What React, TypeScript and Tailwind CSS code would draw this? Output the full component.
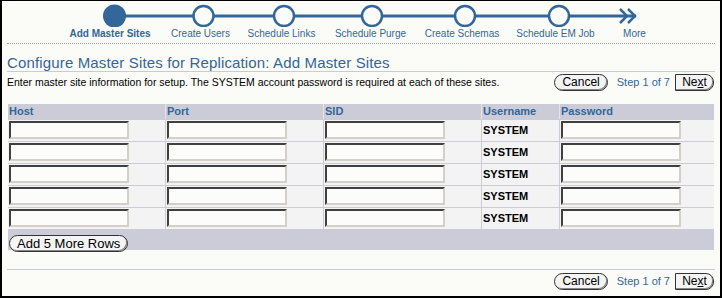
import React from 'react';

const steps = [
  { label: 'Add Master Sites', w: 'w-[100px]', active: true },
  { label: 'Create Users', w: 'w-[81px]' },
  { label: 'Schedule Links', w: 'w-[81px]' },
  { label: 'Schedule Purge', w: 'w-[97px]' },
  { label: 'Create Schemas', w: 'w-[86px]' },
  { label: 'Schedule EM Job', w: 'w-[101px]' },
  { label: 'More', w: 'w-[57px]' },
];

const circles = [203.5, 284, 372, 465, 559];

function Train() {
  return (
    <div>
      <svg width="718" height="26" viewBox="0 0 718 26" className="block">
        <line x1="112" y1="15" x2="634" y2="15" stroke="#336699" strokeWidth="3" />
        <circle cx="112.5" cy="15" r="11.5" fill="#336699" />
        {circles.map((cx) => (
          <circle key={cx} cx={cx - 2} cy="15" r="10" fill="#fbfcf8" stroke="#336699" strokeWidth="2.5" />
        ))}
        <path d="M618 8 L625 15 L618 22 M626 8 L633 15 L626 22" fill="none" stroke="#336699" strokeWidth="2.5" />
      </svg>
      <div className="flex pl-[58px] text-[10px] leading-[13px] text-[#336699]">
        {steps.map((s) => (
          <div key={s.label} className={`${s.w} text-center whitespace-nowrap ${s.active ? 'font-bold' : ''}`}>
            {s.label}
          </div>
        ))}
      </div>
      <div className="mx-[5px] mt-[3px] border-t border-dotted border-[#9aa3ad]" />
    </div>
  );
}

function PillButton({ children, size = 'text-[12px]' }: { children: React.ReactNode; size?: string }) {
  return (
    <button
      className={`h-[17px] px-[7px] rounded-[9px] border border-[#333] bg-[#f4f4f4] ${size} leading-[15px] text-black shadow-[inset_-1px_-1px_0_#888] whitespace-nowrap`}
    >
      {children}
    </button>
  );
}

function NavBar() {
  return (
    <div className="flex items-center">
      <PillButton>Cancel</PillButton>
      <span className="ml-[9px] text-[11px] text-[#336699] whitespace-nowrap">Step 1 of 7</span>
      <button className="ml-[5px] h-[17px] w-[39px] rounded-r-[8px] border border-[#333] bg-[#f4f4f4] text-[12px] leading-[15px] text-black shadow-[inset_-1px_-1px_0_#888]">
        Ne<span className="underline">x</span>t
      </button>
    </div>
  );
}

function TextInput() {
  return (
    <div className="w-[120px] h-[18px] bg-[#fcfdfa] border-2 border-t-[#404040] border-l-[#404040] border-b-[#d4d0c8] border-r-[#d4d0c8]" />
  );
}

const cols = 'grid grid-cols-[158px_158px_158px_78px_155px]';

export default function App() {
  const rows = [0, 1, 2, 3, 4];
  return (
    <div
      className="w-[722px] h-[298px] bg-[#fbfcf8] border-t border-l-2 border-r-2 border-b-2 border-black overflow-hidden"
      style={{ fontFamily: '"Liberation Sans", Arial, sans-serif' }}
    >
      <Train />

      <div className="px-[5px]">
        <h1 className="mt-[10px] text-[15px] leading-[17px] text-[#336699] tracking-[0.15px]">
          Configure Master Sites for Replication: Add Master Sites
        </h1>
        <div className="border-t border-[#c8ccd4]" />
        <div className="flex items-center justify-between mt-[2px] pr-[1px]">
          <p className="text-[10.5px] text-black whitespace-nowrap">
            Enter master site information for setup. The SYSTEM account password is required at each of these sites.
          </p>
          <NavBar />
        </div>

        <div className="mt-[13px] mx-[1px]">
          <div className={`${cols} bg-[#ccccd8] h-[15px] text-[11px] leading-[15px] font-bold text-[#336699]`}>
            <div className="pl-[1px] border-r border-[#e4e4ea]">Host</div>
            <div className="pl-[1px] border-r border-[#e4e4ea]">Port</div>
            <div className="pl-[1px] border-r border-[#e4e4ea]">SID</div>
            <div className="pl-[1px] border-r border-[#e4e4ea]">Username</div>
            <div className="pl-[1px]">Password</div>
          </div>
          {rows.map((r) => (
            <div key={r} className={`${cols} bg-[#f2f3f2] h-[22px] border-t border-[#ccccd8]`}>
              <div className="pl-[1px] pt-[1px] border-r border-[#ccccd8]">
                <TextInput />
              </div>
              <div className="pl-[1px] pt-[1px] border-r border-[#ccccd8]">
                <TextInput />
              </div>
              <div className="pl-[1px] pt-[1px] border-r border-[#ccccd8]">
                <TextInput />
              </div>
              <div className="pl-[1px] flex items-center border-r border-[#ccccd8] text-[11px] font-bold text-black">
                SYSTEM
              </div>
              <div className="pl-[1px] pt-[1px]">
                <TextInput />
              </div>
            </div>
          ))}
          <div className="bg-[#ccccd8] h-[21px] pl-[1px] pt-[2px]">
            <PillButton size="text-[13px]">Add 5 More Rows</PillButton>
          </div>
        </div>

        <div className="mt-[19px] border-t border-[#c8ccd4]" />
        <div className="flex justify-end mt-[3px] pr-[1px]">
          <NavBar />
        </div>
      </div>
    </div>
  );
}
